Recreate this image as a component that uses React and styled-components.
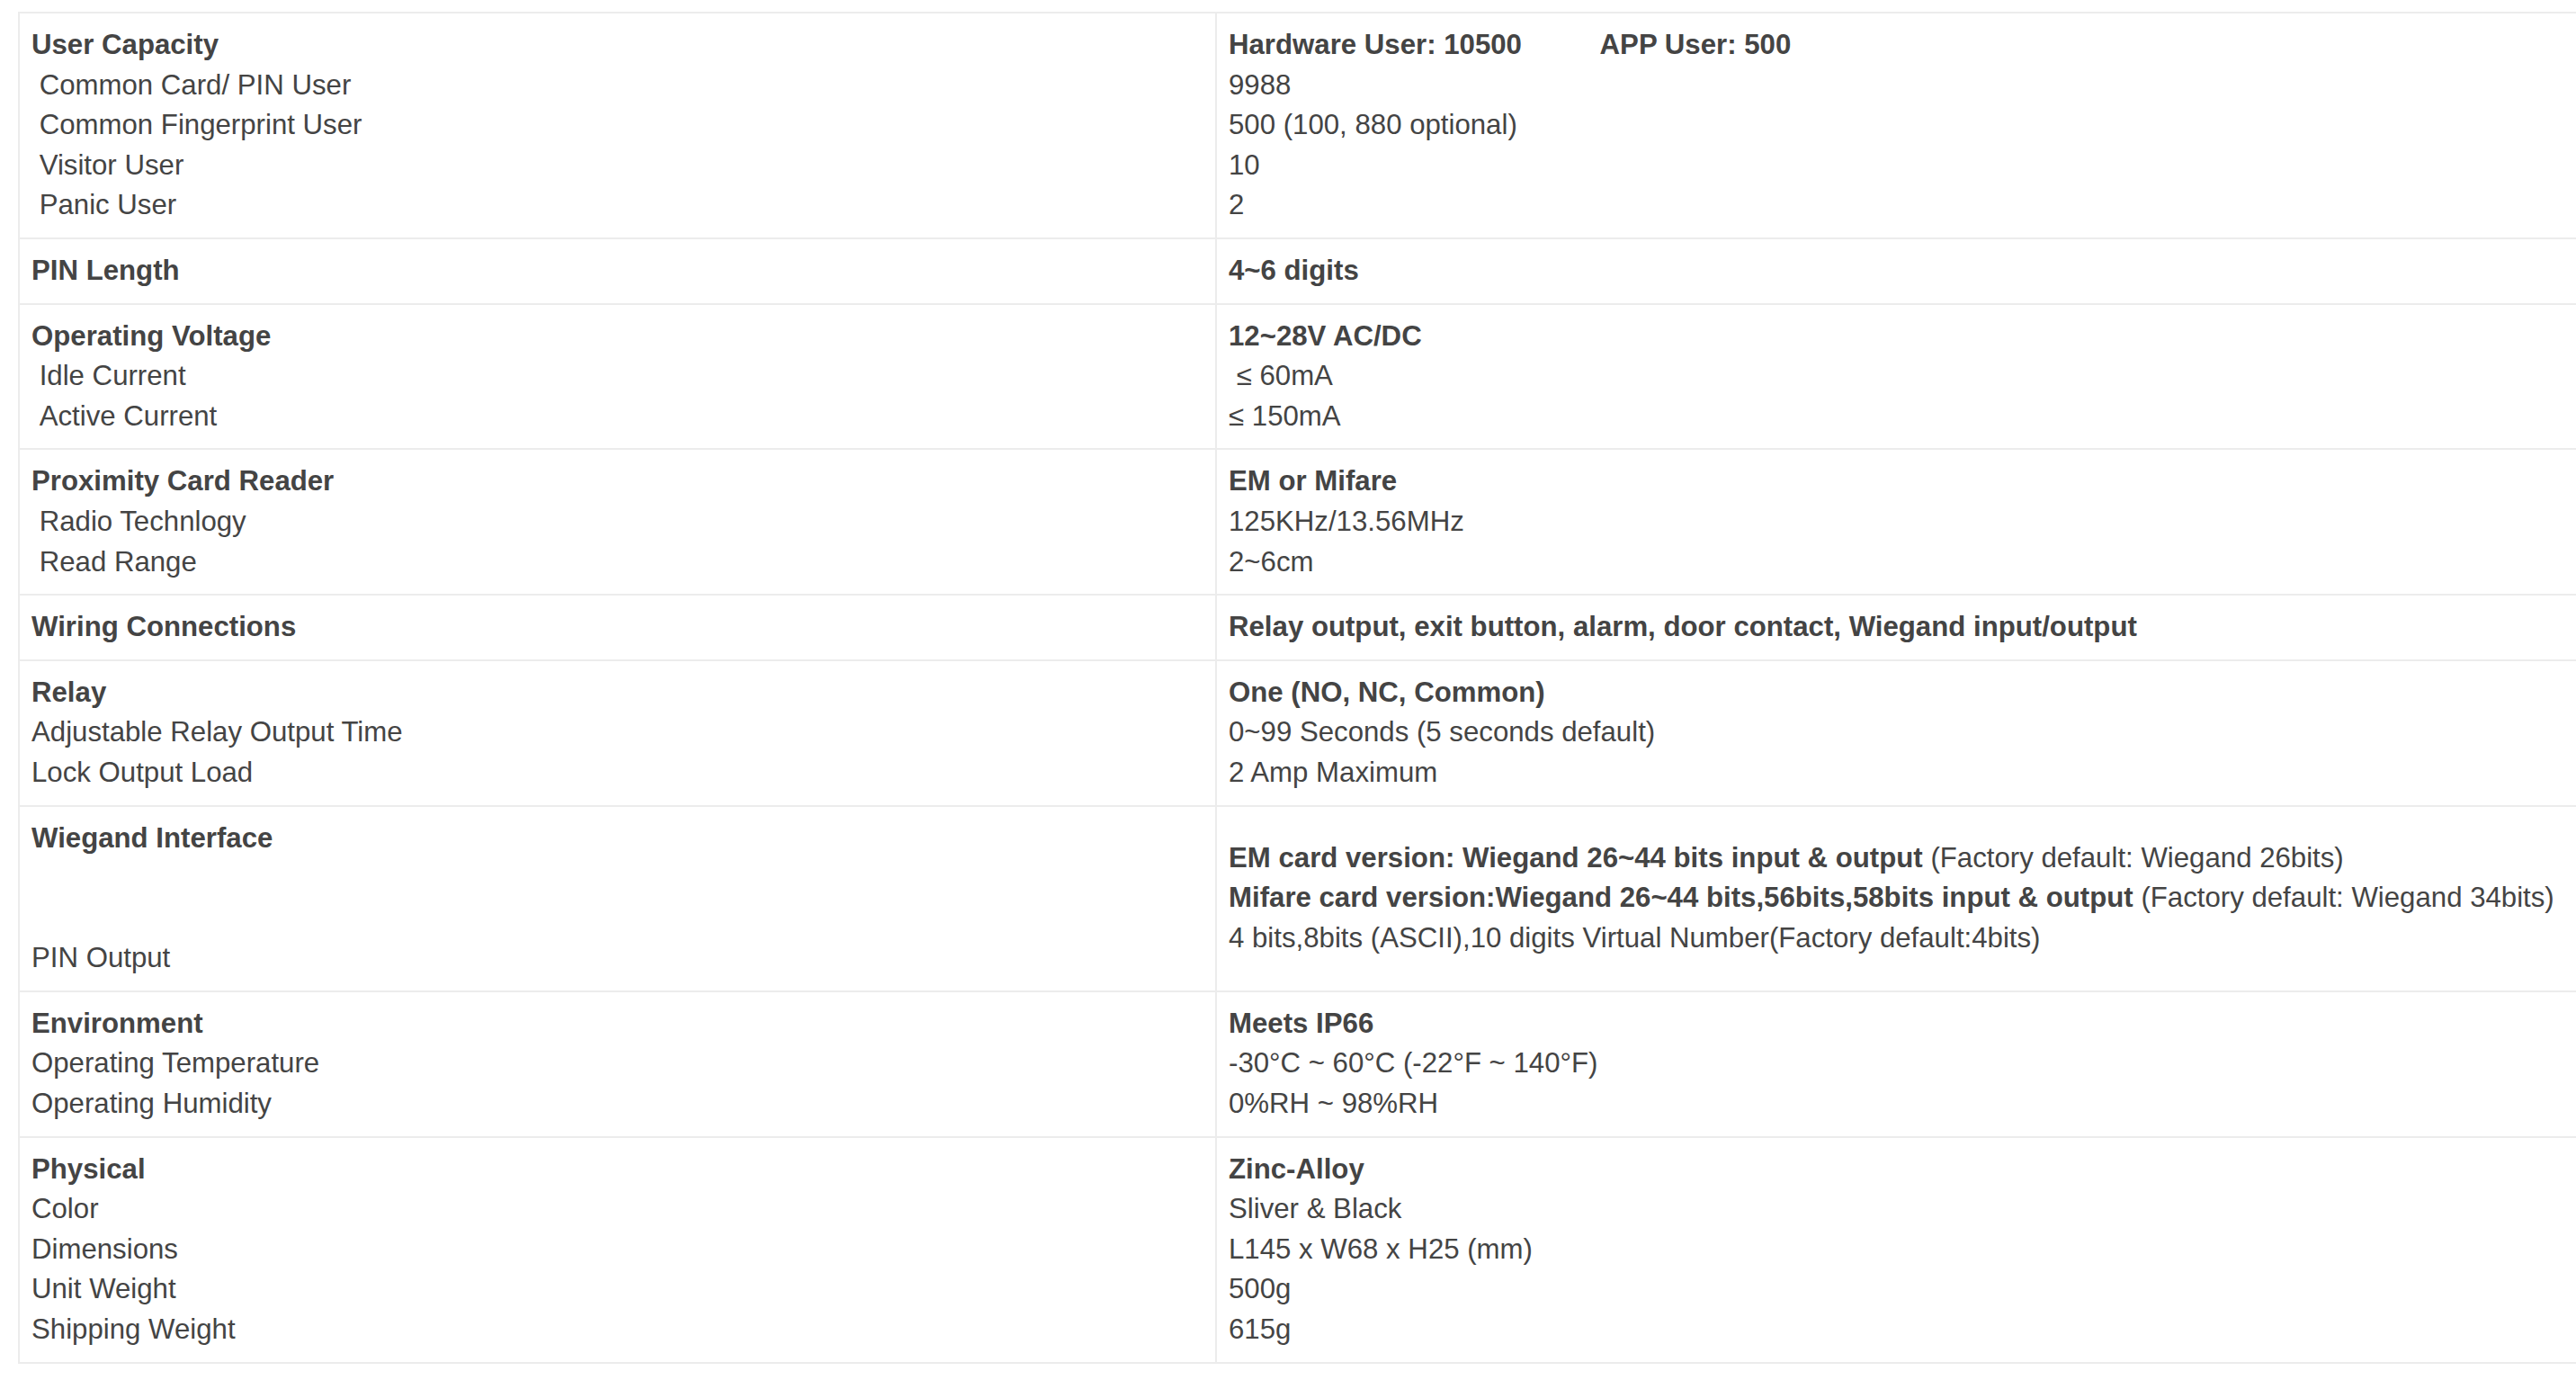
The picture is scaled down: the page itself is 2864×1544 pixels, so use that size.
import React from "react";
import styled, { createGlobalStyle } from "styled-components";

const GlobalStyle = createGlobalStyle`
  html, body {
    margin: 0;
    padding: 0;
    background: #ffffff;
    overflow: hidden;
  }
  * {
    box-sizing: border-box;
  }
`;

const Sheet = styled.div`
  margin: 13px 0 0 20px;
  width: 2900px;
  border-top: 2px solid #ececec;
  border-left: 2px solid #ececec;
  font-family: "Liberation Sans", Arial, Helvetica, sans-serif;
  font-size: 31.2px;
  line-height: 44.6px;
  color: #444444;
`;

const Row = styled.div`
  display: grid;
  grid-template-columns: 1331px 1fr;
  border-bottom: 2px solid #ececec;
`;

const Cell = styled.div`
  display: flex;
  flex-direction: column;
  justify-content: center;
  padding: 13px;
  border-right: ${(props) => (props.$divider ? "2px solid #ececec" : "none")};
`;

const Line = styled.div`
  white-space: nowrap;
  font-weight: ${(props) => (props.$bold ? 700 : 400)};
`;

const Strong = styled.span`
  font-weight: 700;
`;

const sp = "\u00a0";

const specs = [
  {
    label: [
      { t: "User Capacity", b: true },
      { t: sp + "Common Card/ PIN User" },
      { t: sp + "Common Fingerprint User" },
      { t: sp + "Visitor User" },
      { t: sp + "Panic User" },
    ],
    value: [
      { t: "Hardware User: 10500" + sp.repeat(10) + "APP User: 500", b: true },
      { t: "9988" },
      { t: "500 (100, 880 optional)" },
      { t: "10" },
      { t: "2" },
    ],
  },
  {
    label: [{ t: "PIN Length", b: true }],
    value: [{ t: "4~6 digits", b: true }],
  },
  {
    label: [
      { t: "Operating Voltage", b: true },
      { t: sp + "Idle Current" },
      { t: sp + "Active Current" },
    ],
    value: [
      { t: "12~28V AC/DC", b: true },
      { t: sp + "≤ 60mA" },
      { t: "≤ 150mA" },
    ],
  },
  {
    label: [
      { t: "Proximity Card Reader", b: true },
      { t: sp + "Radio Technlogy" },
      { t: sp + "Read Range" },
    ],
    value: [
      { t: "EM or Mifare", b: true },
      { t: "125KHz/13.56MHz" },
      { t: "2~6cm" },
    ],
  },
  {
    label: [{ t: "Wiring Connections", b: true }],
    value: [
      {
        t: "Relay output, exit button, alarm, door contact, Wiegand input/output",
        b: true,
      },
    ],
  },
  {
    label: [
      { t: "Relay", b: true },
      { t: "Adjustable Relay Output Time" },
      { t: "Lock Output Load" },
    ],
    value: [
      { t: "One (NO, NC, Common)", b: true },
      { t: "0~99 Seconds (5 seconds default)" },
      { t: "2 Amp Maximum" },
    ],
  },
  {
    label: [
      { t: "Wiegand Interface", b: true },
      { t: sp },
      { t: sp },
      { t: "PIN Output" },
    ],
    value: [
      {
        strong: "EM card version: Wiegand 26~44 bits input & output",
        t: " (Factory default: Wiegand 26bits)",
      },
      {
        strong:
          "Mifare card version:Wiegand 26~44 bits,56bits,58bits input & output",
        t: " (Factory default: Wiegand 34bits)",
      },
      {
        t: "4 bits,8bits (ASCII),10 digits Virtual Number(Factory default:4bits)",
      },
    ],
  },
  {
    label: [
      { t: "Environment", b: true },
      { t: "Operating Temperature" },
      { t: "Operating Humidity" },
    ],
    value: [
      { t: "Meets IP66", b: true },
      { t: "-30°C ~ 60°C (-22°F ~ 140°F)" },
      { t: "0%RH ~ 98%RH" },
    ],
  },
  {
    label: [
      { t: "Physical", b: true },
      { t: "Color" },
      { t: "Dimensions" },
      { t: "Unit Weight" },
      { t: "Shipping Weight" },
    ],
    value: [
      { t: "Zinc-Alloy", b: true },
      { t: "Sliver & Black" },
      { t: "L145 x W68 x H25 (mm)" },
      { t: "500g" },
      { t: "615g" },
    ],
  },
];

function Lines({ items }) {
  return items.map((item, i) => (
    <Line key={i} $bold={item.b}>
      {item.strong && <Strong>{item.strong}</Strong>}
      {item.t}
    </Line>
  ));
}

function App() {
  return (
    <>
      <GlobalStyle />
      <Sheet>
        {specs.map((row, i) => (
          <Row key={i}>
            <Cell $divider>
              <Lines items={row.label} />
            </Cell>
            <Cell>
              <Lines items={row.value} />
            </Cell>
          </Row>
        ))}
      </Sheet>
    </>
  );
}

export default App;
